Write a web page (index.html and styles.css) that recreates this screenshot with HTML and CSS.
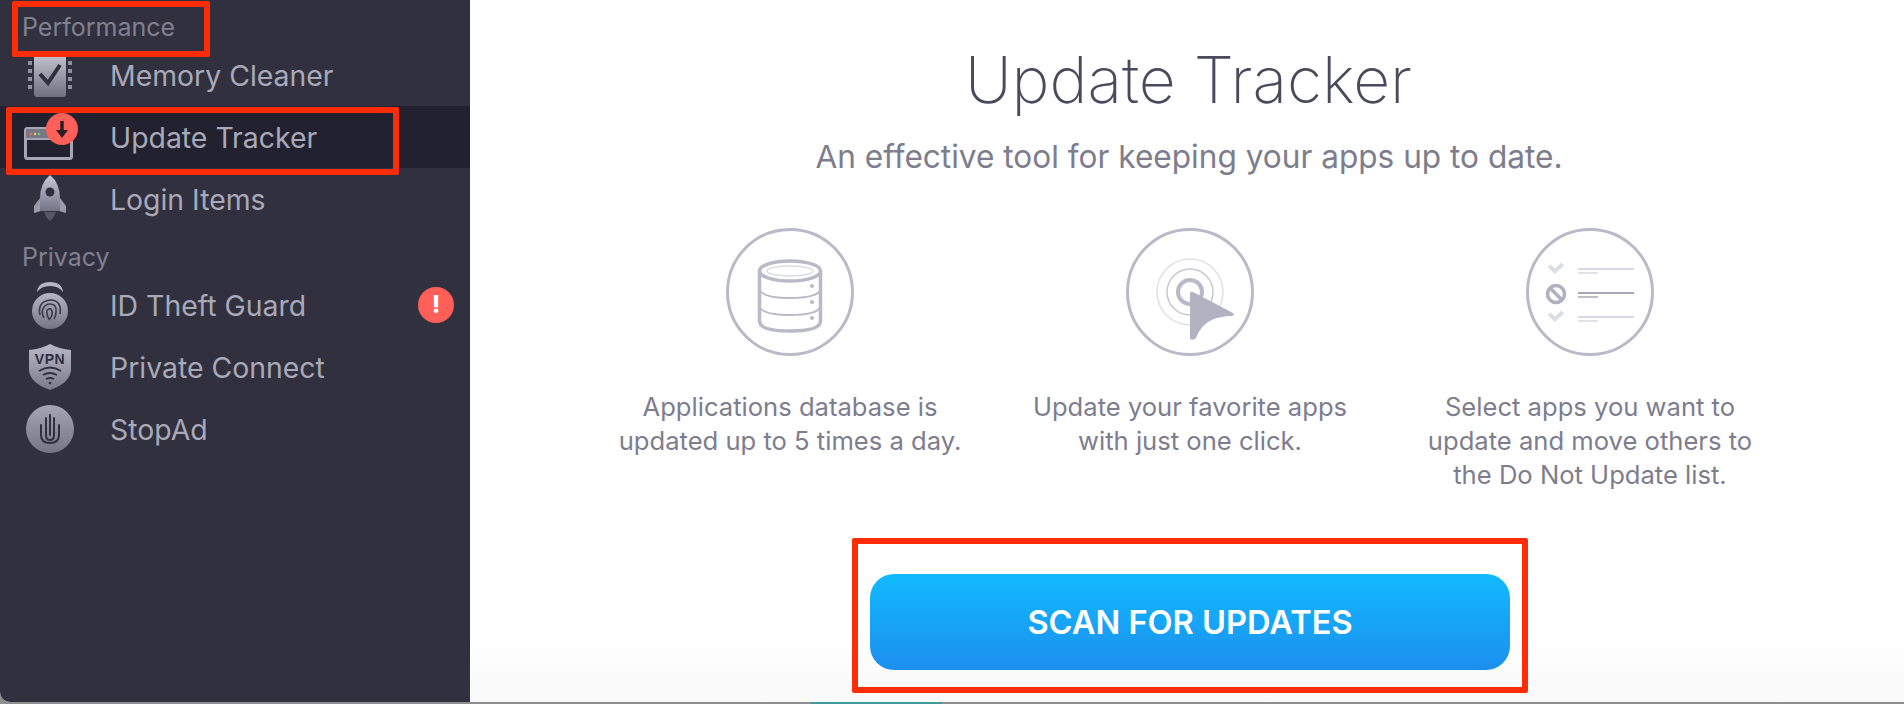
FILE: index.html
```html
<!DOCTYPE html>
<html lang="en">
<head>
<meta charset="utf-8">
<title>Update Tracker</title>
<link rel="stylesheet" href="styles.css">
</head>
<body>
<div class="window">
  <aside class="sidebar">
    <div class="section">Performance</div>
    <div class="item">
      <svg class="icon" viewBox="0 0 56 56"><defs><linearGradient id="g1" x1="0" y1="0" x2="0" y2="1"><stop offset="0" stop-color="#c4c4d0"/><stop offset="1" stop-color="#6f6f7e"/></linearGradient></defs>
        <path d="M11 8h32v39q0 3-3 3H14q-3 0-3-3z" fill="url(#g1)"/>
        <path d="M5 14h4v4H5zM5 22h4v4H5zM5 30h4v4H5zM5 38h4v4H5zM45 14h4v4h-4zM45 22h4v4h-4zM45 30h4v4h-4zM45 38h4v4h-4z" fill="#8f8f9e"/>
        <path d="M17 27l8 9 12-18" fill="none" stroke="#2f2f3e" stroke-width="4"/>
      </svg>
      <span class="label">Memory Cleaner</span>
    </div>
    <div class="item active">
      <svg class="icon" viewBox="0 0 56 56">
        <rect x="2.500" y="19.500" width="46" height="30" rx="2" fill="#22222f" stroke="#a5a5b3" stroke-width="3"/>
        <rect x="3" y="20" width="45" height="10" fill="#777785"/>
        <rect x="3" y="29" width="45" height="2" fill="#a5a5b3"/>
        <circle cx="8" cy="25" r="1.200" fill="#ff6a5f"/><circle cx="12" cy="25" r="1.200" fill="#ffc94f"/><circle cx="16" cy="25" r="1.200" fill="#5ed36a"/>
        <circle cx="39" cy="20" r="16" fill="#fe5f58"/>
        <path d="M39 12v10" fill="none" stroke="#2a1e26" stroke-width="3.500"/>
        <path d="M33 21h12l-6 8z" fill="#2a1e26"/>
      </svg>
      <span class="label">Update Tracker</span>
    </div>
    <div class="item">
      <svg class="icon" viewBox="0 0 56 56"><defs><linearGradient id="g2" x1="0" y1="0" x2="0" y2="1"><stop offset="0" stop-color="#c8c8d2"/><stop offset="1" stop-color="#74748a"/></linearGradient></defs>
        <path d="M21 40l-3 0L11 42v-7l6-8zM33 40l3 0L43 42v-7l-6-8z" fill="#9a9aa8"/>
        <path d="M27 4q10 8 10 24v12H17V28Q17 12 27 4z" fill="url(#g2)"/>
        <path d="M21 41h12l-3 6-3 3-3-3z" fill="#565666"/>
        <circle cx="27" cy="21" r="4.500" fill="#2f2f3e"/>
      </svg>
      <span class="label">Login Items</span>
    </div>
    <div class="section">Privacy</div>
    <div class="item">
      <svg class="icon" viewBox="0 0 56 56"><defs><linearGradient id="g3" x1="0" y1="0" x2="0" y2="1"><stop offset="0" stop-color="#b5b5c2"/><stop offset="1" stop-color="#757585"/></linearGradient></defs>
        <path d="M14 15Q15 5 27 5t13 10q-4-6-13-6t-13 6z" fill="#b5b5c2"/>
        <circle cx="27" cy="34" r="18" fill="url(#g3)"/>
        <g fill="none" stroke="#3a3a49" stroke-width="1.600"><path d="M17 38q-3-13 10-15 12 0 10 14"/><path d="M21 41q-3-6-1-9 2-5 7-5 7 0 6 8 0 4-2 7"/><path d="M26 43q4-4 3-9-1-3-3-2-3 1-2 4 0 3 2 6"/></g>
      </svg>
      <span class="label">ID Theft Guard</span>
      <span class="alert">!</span>
    </div>
    <div class="item">
      <svg class="icon" viewBox="0 0 56 56"><defs><linearGradient id="g4" x1="0" y1="0" x2="0" y2="1"><stop offset="0" stop-color="#b9b9c6"/><stop offset="1" stop-color="#7a7a8a"/></linearGradient></defs>
        <path d="M27 5q9 5 21 6v20q-1 13-21 20Q7 44 6 31V11q12-1 21-6z" fill="url(#g4)"/>
        <g fill="none" stroke="#2f2f3e" stroke-width="1.800"><path d="M16 32q11-7 22 0"/><path d="M20 36q7-4 14 0"/><path d="M23 40q4-2 8 0"/></g>
        <circle cx="27" cy="44" r="1.300" fill="#2f2f3e"/>
        <text x="27" y="25" class="vpn">VPN</text>
      </svg>
      <span class="label">Private Connect</span>
    </div>
    <div class="item">
      <svg class="icon" viewBox="0 0 56 56"><defs><linearGradient id="g5" x1="0" y1="0" x2="0" y2="1"><stop offset="0" stop-color="#a5a5b3"/><stop offset="1" stop-color="#757584"/></linearGradient></defs>
        <circle cx="27" cy="28" r="24" fill="url(#g5)"/>
        <g fill="none" stroke="#2f2f3e" stroke-width="2" stroke-linecap="round"><path d="M27 14v20"/><path d="M23 17v17q0 5 4 5t4-5V17"/><path d="M18 24v10q0 8 9 8t9-8V24"/></g>
      </svg>
      <span class="label">StopAd</span>
    </div>
  </aside>
  <main class="main">
    <h1 class="title">Update Tracker</h1>
    <p class="subtitle">An effective tool for keeping your apps up to date.</p>
    <div class="features">
      <div class="feature">
        <svg class="ficon" viewBox="0 0 128 128">
          <circle cx="64" cy="64" r="62.500" fill="none" stroke="#b9b9c8" stroke-width="3"/>
          <g fill="none" stroke="#b9b9c8">
            <path d="M33.500 43v50q0 10 30.500 10t30.500-10V43" stroke-width="3.500"/>
            <ellipse cx="64" cy="43" rx="30.500" ry="10" stroke-width="3.500"/>
            <ellipse cx="64" cy="43" rx="23" ry="5" stroke="#dcdce4" stroke-width="1.500"/>
            <path d="M33.500 62q4 8 30.500 8t30.500-8M33.500 79q4 8 30.500 8t30.500-8" stroke-width="1.800"/>
          </g>
          <circle cx="86" cy="58" r="2" fill="#b9b9c8"/><circle cx="86" cy="74" r="2" fill="#b9b9c8"/><circle cx="86" cy="90" r="2" fill="#b9b9c8"/>
        </svg>
        <p class="fcopy">Applications database is<br>updated up to 5 times a day.</p>
      </div>
      <div class="feature">
        <svg class="ficon" viewBox="0 0 128 128">
          <circle cx="64" cy="64" r="62.500" fill="none" stroke="#b9b9c8" stroke-width="3"/>
          <circle cx="64" cy="64" r="33" fill="none" stroke="#e0e0e8" stroke-width="1.500"/>
          <circle cx="64" cy="64" r="23" fill="none" stroke="#c8c8d4" stroke-width="1.500"/>
          <circle cx="64" cy="64" r="12" fill="none" stroke="#b9b9c8" stroke-width="4"/>
          <path d="M64 66q0-3 3-2l40 21q2 2-1 3Q78 88 70 110q-2 3-6 1z" fill="#b2b2c2"/>
        </svg>
        <p class="fcopy">Update your favorite apps<br>with just one click.</p>
      </div>
      <div class="feature">
        <svg class="ficon" viewBox="0 0 128 128">
          <circle cx="64" cy="64" r="62.500" fill="none" stroke="#b9b9c8" stroke-width="3"/>
          <path d="M23 38l6 5 8-7M23 86l6 5 8-7" fill="none" stroke="#dcdce4" stroke-width="4"/>
          <circle cx="30" cy="66" r="8.500" fill="none" stroke="#b0b0c0" stroke-width="3.500"/>
          <path d="M24 60l12 12" stroke="#b0b0c0" stroke-width="3.500"/>
          <path d="M52 41h56M52 89h56" stroke="#d8d8e2" stroke-width="1.800"/>
          <path d="M52 45h20M52 93h20" stroke="#d8d8e2" stroke-width="1.500"/>
          <path d="M52 65h56" stroke="#a8a8b8" stroke-width="1.800"/>
          <path d="M52 69h20" stroke="#a8a8b8" stroke-width="1.500"/>
        </svg>
        <p class="fcopy">Select apps you want to<br>update and move others to<br>the Do Not Update list.</p>
      </div>
    </div>
    <button class="scan">SCAN FOR UPDATES</button>
  </main>
  <div class="mark mark-perf"></div>
  <div class="mark mark-item"></div>
  <div class="mark mark-scan"></div>
</div>
<div class="strip"></div>
</body>
</html>
```
FILE: styles.css
```css
* { box-sizing: border-box; }
html, body { margin: 0; height: 100%; background: #8e8e8e; overflow: hidden; }
body { font-family: Inter, "Liberation Sans", sans-serif; }
.window { position: relative; display: flex; width: 1904px; height: 702px; background: linear-gradient(#fff 90%, #f9f9fa); border-bottom-left-radius: 10px; overflow: hidden; }
.strip { height: 2px; background: linear-gradient(90deg, #8e8e8e 811px, #3f9a98 811px, #3f9a98 942px, #8e8e8e 942px); }
.sidebar { width: 470px; flex: none; background: #31303f; }
.section { height: 44px; padding: 10px 0 0 22px; font-size: 25px; line-height: 34px; color: #80808f; }
.item { display: flex; align-items: center; height: 62px; padding-left: 23px; }
.item.active { background: #222130; }
.icon { width: 56px; height: 56px; flex: none; margin-right: 31px; overflow: visible; }
.label { font-size: 28.4px; color: #a9a9b8; }
.vpn { font-family: "Liberation Sans", sans-serif; font-size: 14px; font-weight: 700; text-anchor: middle; fill: #2f2f3e; letter-spacing: 0.5px; }
.alert { width: 36px; height: 36px; margin-left: auto; margin-right: 16px; border-radius: 50%; background: #fe5f58; color: #fff; font-size: 24px; font-weight: 800; line-height: 36px; text-align: center; }
.main { flex: 1; display: flex; flex-direction: column; align-items: center; padding-top: 40px; }
.title { margin: 0 0 0 3px; font-size: 64.2px; line-height: 80px; font-weight: 200; color: #4a4a5c; }
.subtitle { margin: 17px 0 0 4px; font-size: 31.6px; line-height: 40px; color: #7d7d8d; }
.features { display: flex; justify-content: center; margin: 51px 0 0 6px; }
.feature { width: 400px; display: flex; flex-direction: column; align-items: center; }
.ficon { width: 128px; height: 128px; }
.fcopy { margin: 34px 0 0; font-size: 25.6px; line-height: 34px; color: #7d7d8d; text-align: center; }
.scan { position: absolute; left: 870px; top: 574px; width: 640px; height: 96px; border: 0; border-radius: 24px; background: linear-gradient(#12baff, #1c8fee); color: #fff; font: 600 32.6px Inter, sans-serif; }
.mark { position: absolute; border: 6px solid #ff2d07; border-radius: 2px; }
.mark-perf { left: 12px; top: 1px; width: 198px; height: 56px; }
.mark-item { left: 6px; top: 107px; width: 393px; height: 68px; }
.mark-scan { left: 852px; top: 538px; width: 676px; height: 155px; }
```
